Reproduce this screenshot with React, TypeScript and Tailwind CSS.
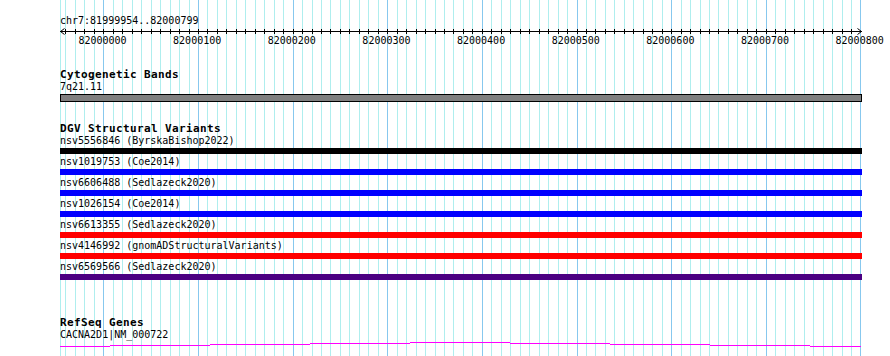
import React from "react";

const X0 = 59.8;
const S = 0.94638;
const START = 81999954;
const xOf = (bp: number) => X0 + (bp - START) * S;

const minorLines: number[] = [];
const majorLines: number[] = [];
for (let bp = 81999960; bp <= 82000800; bp += 10) {
  const x = Math.round(xOf(bp));
  if (bp % 100 === 0) majorLines.push(x);
  else minorLines.push(x);
}
const ticks: number[] = [];
for (let bp = 81999960; bp <= 82000790; bp += 10) ticks.push(Math.round(xOf(bp)));
const labels: { bp: number; x: number }[] = [];
for (let bp = 82000000; bp <= 82000800; bp += 100) labels.push({ bp, x: xOf(bp) - 0.8 });

const variants = [
  { label: "nsv5556846 (ByrskaBishop2022)", color: "bg-[#000000]" },
  { label: "nsv1019753 (Coe2014)", color: "bg-[#0000ff]" },
  { label: "nsv6606488 (Sedlazeck2020)", color: "bg-[#0000ff]" },
  { label: "nsv1026154 (Coe2014)", color: "bg-[#0000ff]" },
  { label: "nsv6613355 (Sedlazeck2020)", color: "bg-[#ff0000]" },
  { label: "nsv4146992 (gnomADStructuralVariants)", color: "bg-[#ff0000]" },
  { label: "nsv6569566 (Sedlazeck2020)", color: "bg-[#4b0082]" },
];

const geneSegs = [
  { x1: 60, x2: 110, y: 5 },
  { x1: 110, x2: 210, y: 4 },
  { x1: 210, x2: 310, y: 3 },
  { x1: 310, x2: 410, y: 2 },
  { x1: 410, x2: 510, y: 1 },
  { x1: 510, x2: 610, y: 2 },
  { x1: 610, x2: 710, y: 3 },
  { x1: 710, x2: 810, y: 4 },
  { x1: 810, x2: 861, y: 5 },
];

const mono = "font-['DejaVu_Sans_Mono','Liberation_Mono',monospace]";

function Title({ children }: { children: React.ReactNode }) {
  return (
    <div className="h-[13px] pl-[60px] text-[11px] leading-[13px] font-bold tracking-[0.38px] text-black whitespace-pre">
      {children}
    </div>
  );
}

function Label({ children, className = "" }: { children: React.ReactNode; className?: string }) {
  return (
    <div className={`h-[12px] pl-[60px] text-[10px] leading-[12px] text-black whitespace-pre ${className}`}>
      {children}
    </div>
  );
}

export default function App() {
  return (
    <div className={`relative w-[890px] h-[356px] overflow-hidden bg-white ${mono}`}>
      <svg className="absolute inset-0" width={890} height={356} shapeRendering="crispEdges">
        <rect x={60} y={0} width={1} height={356} fill="#afeeee" />
        {minorLines.map((x) => (
          <rect key={"mi" + x} x={x} y={0} width={1} height={356} fill="#afeeee" />
        ))}
        {majorLines.map((x) => (
          <rect key={"ma" + x} x={x} y={0} width={1} height={356} fill="#87c8ee" />
        ))}
      </svg>

      <div className="relative flex flex-col pt-[15px]">
        <Label>chr7:81999954..82000799</Label>

        <svg className="block" width={890} height={20}>
          <rect x={60} y={4} width={802} height={1} fill="#000" shapeRendering="crispEdges" />
          {ticks.map((x) => (
            <rect key={"t" + x} x={x} y={2} width={1} height={5} fill="#000" shapeRendering="crispEdges" />
          ))}
          <polyline points="64.5,1.5 60.5,4.5 64.5,7.5" fill="none" stroke="#000" strokeWidth={1} />
          <polyline points="857.5,1.5 861.5,4.5 857.5,7.5" fill="none" stroke="#000" strokeWidth={1} />
          {labels.map((l) => (
            <text
              key={l.bp}
              x={l.x}
              y={17}
              textAnchor="middle"
              fontFamily="'DejaVu Sans Mono','Liberation Mono',monospace"
              fontSize={10}
              fill="#000"
            >
              {l.bp}
            </text>
          ))}
        </svg>

        <div className="mt-[21px]">
          <Title>Cytogenetic Bands</Title>
          <Label>7q21.11</Label>
          <div className="mt-[1px] ml-[60px] w-[802px] h-[8px] bg-[#808080] border border-black" />
        </div>

        <div className="mt-[20px]">
          <Title>DGV Structural Variants</Title>
          {variants.map((v, i) => (
            <div key={v.label} className={i === 0 ? "" : "mt-[2px]"}>
              <Label>{v.label}</Label>
              <div className={`mt-[1px] ml-[60px] w-[802px] h-[6px] ${v.color}`} />
            </div>
          ))}
        </div>

        <div className="mt-[36px]">
          <Title>RefSeq Genes</Title>
          <Label>CACNA2D1|NM_000722</Label>
          <svg className="block" width={890} height={8} shapeRendering="crispEdges">
            {geneSegs.map((s) => (
              <rect key={s.x1} x={s.x1} y={s.y} width={s.x2 - s.x1} height={1} fill="#ff00ff" />
            ))}
          </svg>
        </div>
      </div>
    </div>
  );
}
